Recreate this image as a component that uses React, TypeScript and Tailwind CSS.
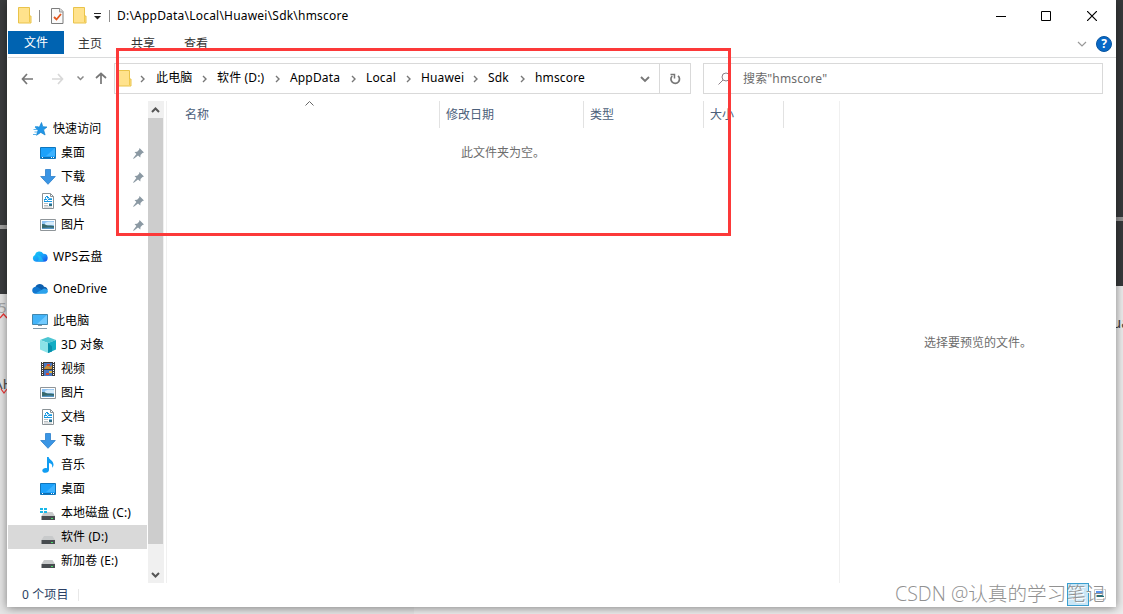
import type { ReactNode } from 'react';
import { clsx } from 'clsx';

interface NavItem {
  label: string;
  icon: ReactNode;
  root?: boolean;
  pinned?: boolean;
  selected?: boolean;
}

function FolderIcon() {
  return (
    <svg width="14" height="17" viewBox="0 0 14 17" className="shrink-0">
      <path d="M.5.5h11v8.500h1.500v7H.5z" fill="#ffe28c" stroke="#e9c34a" />
      <path d="M11.500 9v6" stroke="#f0c94e" />
    </svg>
  );
}

function CheckDocIcon() {
  return (
    <svg width="13" height="16" viewBox="0 0 13 16" className="shrink-0">
      <path d="M.5.5h8.500l3 3v12H.5z" fill="#fafafa" stroke="#7d7d7d" />
      <path d="M8.500.5v3.500H12" fill="#ddd" stroke="#999" />
      <path d="M3 9l2.500 2.500L10 6" fill="none" stroke="#e2571e" strokeWidth="1.800" />
    </svg>
  );
}

function StarIcon() {
  return (
    <svg width="16" height="16" viewBox="0 0 16 16">
      <path d="M9.500 1.500l1.300 4.200 4.200.3-3.400 2.800 1.500 5.200-4.300-2.600-4.300 2.900L6 9.300 3.200 6.300l4.300-.4z" fill="#2196e8" stroke="#1583cc" strokeWidth=".7" />
      <path d="M3 5.500h3M1.500 8.500H5M2.500 11H5M1 13.500h3" stroke="#59b4ee" />
    </svg>
  );
}

function DesktopIcon() {
  return (
    <svg width="16" height="16" viewBox="0 0 16 16">
      <path d="M.5 2.500h15v11H.5z" fill="#1ba1fb" stroke="#0f76bd" />
      <path d="M6 11L15 3v8z" fill="#3db2ff" />
      <path d="M1 12.500h14" stroke="#0d6cb0" />
      <path d="M2 12.500h1M11 12.500h1M13 12.500h1" stroke="#fff" />
    </svg>
  );
}

function DownloadIcon() {
  return (
    <svg width="16" height="16" viewBox="0 0 16 16">
      <path d="M5.500.5h5v7h4.800L8 15.300.7 7.500h4.800z" fill="#3a95e4" stroke="#2b7fcb" strokeWidth=".8" />
    </svg>
  );
}

function DocumentIcon() {
  return (
    <svg width="16" height="16" viewBox="0 0 16 16">
      <path d="M2.500.5h8l3 3v12h-11z" fill="#fff" stroke="#8a9296" />
      <path d="M10.500.5v3h3" fill="none" stroke="#8a9296" />
      <path d="M6 3.500h2M5 4.500h1M7 4.500h2M4 6.500h3M8 6.500h4M4 8.500h8" stroke="#1596e0" />
      <path d="M5 5.500h1M7.500 5.500h1M9 5.500h3M4 7.500h1M7 7.500h1" stroke="#55b5ea" />
      <path d="M4 10.500h4M4 12.500h4M4 14h8" stroke="#a7adb1" strokeWidth=".8" />
      <path d="M9 10h3v1H9z" fill="#6db7ea" />
      <path d="M9 11h3v2H9z" fill="#2e6f86" />
    </svg>
  );
}

function PictureIcon() {
  return (
    <svg width="16" height="16" viewBox="0 0 16 16">
      <path d="M.5 2.500h15v11H.5z" fill="#fff" stroke="#8f9599" />
      <path d="M2 4h12v8H2z" fill="#8fc3f3" />
      <path d="M5 6c2-1.500 5-1.500 9-1v3H5z" fill="#d5ebfb" />
      <path d="M2 7c3-.6 4 1.500 6 1.500S12 8.500 14 9v3H2z" fill="#37696c" />
      <path d="M2 11l7-.5 5 .2V12H2z" fill="#5796c6" />
    </svg>
  );
}

function WpsCloudIcon() {
  return (
    <svg width="16" height="16" viewBox="0 0 16 16">
      <defs>
        <linearGradient id="wps" x1="0" x2="1" y1="0" y2="1">
          <stop offset="0" stopColor="#13d4f5" />
          <stop offset=".55" stopColor="#189cf9" />
          <stop offset="1" stopColor="#1649e8" />
        </linearGradient>
      </defs>
      <path d="M4.500 13.500A3.500 3.500 0 013 6.800 4.500 4.500 0 0111.300 5.500a4 4 0 01.7 8z" fill="url(#wps)" transform="translate(0 -.8)" />
      <path d="M5 6.500c2.500-.6 3.800.8 4.500 2l2.500 4H5.500C7.500 10 6.800 8 5 6.500z" fill="#20cdf2" opacity=".6" />
    </svg>
  );
}

function OneDriveIcon() {
  return (
    <svg width="16" height="16" viewBox="0 0 16 16">
      <g transform="translate(0 -.7)">
        <path d="M3.500 6.500a4.600 4.600 0 018.500 0c2 0 3.700 1.700 3.700 3.500L8 11z" fill="#0c5fae" />
        <path d="M3.500 13.500C1.500 13.500.2 12 .2 10a3.600 3.600 0 015.300-3.200L14 12.500z" fill="#1277cf" />
        <path d="M3 13.500L12 8.200c2 0 3.800 1 3.800 2.800 0 1.500-1.100 2.500-2.600 2.500z" fill="#2ba2ec" />
      </g>
    </svg>
  );
}

function ComputerIcon() {
  return (
    <svg width="16" height="16" viewBox="0 0 16 16">
      <path d="M.5 1.500h15v10H.5z" fill="#42b3f8" stroke="#4187ae" />
      <path d="M5 11L15 2v9z" fill="#71caff" />
      <path d="M6 12.500h4" stroke="#8b98a2" />
      <path d="M1 15.500h14" stroke="#8299a9" />
    </svg>
  );
}

function CubeIcon() {
  return (
    <svg width="16" height="16" viewBox="0 0 16 16">
      <path d="M8 0l8 3-8 3-8-3z" fill="#4cc5d2" />
      <path d="M0 3l8 3v10l-8-3.500z" fill="#8be3e8" />
      <path d="M16 3L8 6v10l8-3.500z" fill="#12acc4" />
      <path d="M8 6l4 3.500v5L8 16z" fill="#078fab" />
    </svg>
  );
}

function VideoIcon() {
  return (
    <svg width="16" height="16" viewBox="0 0 16 16">
      <path d="M1 1h14v14H1z" fill="#3c3c3c" />
      <path d="M4 2h8v6H4zM4 9h8v6H4z" fill="#4877c5" />
      <path d="M5 6l2-2 3 2 2-2v4H4z" fill="#c88f35" />
      <path d="M7 3h3v2H7zM6 12h3v2H6z" fill="#d44932" />
      <path d="M9 10h3v2H9z" fill="#e1b83e" />
      <path d="M2.500 1v14M13.500 1v14" stroke="#fff" strokeDasharray="1 1" />
    </svg>
  );
}

function MusicIcon() {
  return (
    <svg width="16" height="16" viewBox="0 0 16 16">
      <path d="M7 0h1.700c.2 2.500 4.800 3.500 4.800 7.500 0 1.200-.4 2.300-1.300 3.200.5-3-1-4.400-3.200-4.700V13c0 1.600-1.500 2.800-3.500 2.800S2.300 15 2.300 13.500C2.300 12 4 11 5.500 11c.6 0 1.100.1 1.500.3z" fill="#119df2" />
    </svg>
  );
}

function DriveIcon({ system }: { system?: boolean }) {
  return (
    <svg width="16" height="16" viewBox="0 0 16 16">
      <path d="M4 7h8.500L15 11H1.500z" fill="#c8cacb" />
      <path d="M1.500 11H15v4H1.500z" fill="#484c50" />
      <path d="M11 13.500h2" stroke="#49dc67" />
      {system && <path d="M0 3h3v2H0zM4 3h3v2H4zM0 6h3v2H0zM4 6h3v2H4z" fill="#18b7e9" />}
    </svg>
  );
}

function PinIcon() {
  return (
    <svg width="11" height="11" viewBox="0 0 11 11">
      <path d="M6.500 0L11 4.500l-1.500.4-2 2-.2 2.600L5 7.500.8 10.800 0 10.500 3.400 6 1.500 4l2.600-.3 2-2z" fill="#8b99a3" />
    </svg>
  );
}

const quickAccess: NavItem[] = [
  { label: '快速访问', icon: <StarIcon />, root: true },
  { label: '桌面', icon: <DesktopIcon />, pinned: true },
  { label: '下载', icon: <DownloadIcon />, pinned: true },
  { label: '文档', icon: <DocumentIcon />, pinned: true },
  { label: '图片', icon: <PictureIcon />, pinned: true },
];

const thisPc: NavItem[] = [
  { label: '此电脑', icon: <ComputerIcon />, root: true },
  { label: '3D 对象', icon: <CubeIcon /> },
  { label: '视频', icon: <VideoIcon /> },
  { label: '图片', icon: <PictureIcon /> },
  { label: '文档', icon: <DocumentIcon /> },
  { label: '下载', icon: <DownloadIcon /> },
  { label: '音乐', icon: <MusicIcon /> },
  { label: '桌面', icon: <DesktopIcon /> },
  { label: '本地磁盘 (C:)', icon: <DriveIcon system /> },
  { label: '软件 (D:)', icon: <DriveIcon />, selected: true },
  { label: '新加卷 (E:)', icon: <DriveIcon /> },
];

const groups: NavItem[][] = [
  quickAccess,
  [{ label: 'WPS云盘', icon: <WpsCloudIcon />, root: true }],
  [{ label: 'OneDrive', icon: <OneDriveIcon />, root: true }],
  thisPc,
];

const crumbs = [
  { label: '此电脑', width: 'w-[61px]' },
  { label: '软件 (D:)', width: 'w-[73px]' },
  { label: 'AppData', width: 'w-[76px]' },
  { label: 'Local', width: 'w-[55px]' },
  { label: 'Huawei', width: 'w-[67px]' },
  { label: 'Sdk', width: 'w-[47px]' },
  { label: 'hmscore', width: 'w-[105px]' },
];

const columns = [
  { label: '名称', width: 'w-[273px] pl-[18px]' },
  { label: '修改日期', width: 'w-36 pl-1.5' },
  { label: '类型', width: 'w-[120px] pl-1.5' },
  { label: '大小', width: 'w-20 pl-1.5' },
];

function CrumbChevron() {
  return (
    <svg width="5" height="8" viewBox="0 0 5 8" className="shrink-0">
      <path d="M1 1l3 3-3 3" fill="none" stroke="#777" strokeWidth="1.400" />
    </svg>
  );
}

function TitleBar() {
  return (
    <div className="flex h-[31px] items-center pl-2.5">
      <FolderIcon />
      <span className="ml-[7px] h-3 w-px bg-[#8c8c8c]" />
      <span className="ml-[11px]"><CheckDocIcon /></span>
      <span className="ml-[9px]"><FolderIcon /></span>
      <svg width="7" height="7" viewBox="0 0 7 7" className="mt-0.5 ml-[7px]">
        <path d="M0 .5h7" stroke="#222" />
        <path d="M0 3h7L3.500 6.500z" fill="#222" />
      </svg>
      <span className="ml-2 h-3 w-px bg-[#8c8c8c]" />
      <span className="ml-[7px] text-[12px] tracking-[0.21px] text-black">D:\AppData\Local\Huawei\Sdk\hmscore</span>
      <div className="mr-[19px] ml-auto flex items-center">
        <svg width="10" height="10"><path d="M0 5.500h10" stroke="#000" /></svg>
        <svg width="10" height="10" className="ml-[35px]"><path d="M.5.5h9v9h-9z" fill="none" stroke="#000" /></svg>
        <svg width="10" height="10" className="ml-9"><path d="M0 0l10 10M10 0L0 10" stroke="#000" strokeWidth="1.200" /></svg>
      </div>
    </div>
  );
}

function RibbonTabs() {
  return (
    <div className="flex h-[27px] items-start border-b border-[#dadbdc]">
      <div className="flex h-[23px] w-14 items-center justify-center bg-[#0063b1] text-white">文件</div>
      {['主页', '共享', '查看'].map((tab) => (
        <div key={tab} className="flex h-[25px] w-[53px] items-center justify-center pr-px text-[#333]">
          {tab}
        </div>
      ))}
      <div className="mt-[5px] mr-1 ml-auto flex items-center gap-[9px]">
        <svg width="10" height="6" viewBox="0 0 10 6">
          <path d="M1 1l4 4 4-4" fill="none" stroke="#999" strokeWidth="1.200" />
        </svg>
        <span className="flex size-4 items-center justify-center rounded-full border border-[#0855a0] bg-[#0868c6] text-[12px] font-bold text-white">
          ?
        </span>
      </div>
    </div>
  );
}

function AddressRow() {
  return (
    <div className="flex h-9 items-start pt-[5px]">
      <div className="flex h-[31px] w-[106px] items-center pl-[13px]">
        <svg width="13" height="12" viewBox="0 0 13 12">
          <path d="M6 1L1.500 6 6 11M1.500 6H12" fill="none" stroke="#777" strokeWidth="1.700" />
        </svg>
        <svg width="13" height="12" viewBox="0 0 13 12" className="ml-[17px]">
          <path d="M7 1l4.500 5L7 11M11.500 6H1" fill="none" stroke="#d8d8d8" strokeWidth="1.700" />
        </svg>
        <svg width="7" height="5" viewBox="0 0 7 5" className="ml-[13px]">
          <path d="M.5.5l3 3 3-3" fill="none" stroke="#888" strokeWidth="1.500" />
        </svg>
        <svg width="12" height="13" viewBox="0 0 12 13" className="ml-[11px]">
          <path d="M1 6l5-4.500L11 6M6 1.500V12" fill="none" stroke="#777" strokeWidth="1.700" />
        </svg>
      </div>
      <div className="flex h-[31px] w-[577px] items-center border border-[#d9d9d9] pl-[3px]">
        <FolderIcon />
        <span className="mr-[11px] ml-2"><CrumbChevron /></span>
        {crumbs.map((crumb, idx) => (
          <div key={crumb.label} className={clsx('flex items-center justify-between pr-2.5', crumb.width)}>
            <span className="-mt-0.5 tracking-[0.15px] text-black">{crumb.label}</span>
            {idx < crumbs.length - 1 && <CrumbChevron />}
          </div>
        ))}
        <svg width="10" height="7" viewBox="0 0 10 7" className="mt-0.5">
          <path d="M1 1l4 4 4-4" fill="none" stroke="#777" strokeWidth="1.900" />
        </svg>
        <div className="ml-auto flex h-full w-[31px] items-center justify-center border-l border-[#d9d9d9]">
          <svg width="12" height="12" viewBox="0 0 12 12">
            <path d="M9 2.800A4.300 4.300 0 113.200 3" fill="none" stroke="#777" strokeWidth="1.700" />
            <path d="M1.500 1.500h4v4" fill="none" stroke="#777" strokeWidth="1.500" />
          </svg>
        </div>
      </div>
      <div className="ml-3 flex h-[31px] w-[400px] items-center border border-[#d9d9d9] pl-3.5">
        <svg width="13" height="13" viewBox="0 0 13 13">
          <circle cx="8" cy="5" r="4" fill="none" stroke="#8d8087" />
          <path d="M5 8L.5 12.500" stroke="#8d8087" />
        </svg>
        <span className="ml-3 tracking-[0.15px] text-[#6b6b6b]">搜索"hmscore"</span>
      </div>
    </div>
  );
}

function NavRow({ item }: { item: NavItem }) {
  return (
    <div
      className={clsx(
        'flex h-6 items-center gap-[5px] text-black',
        item.root ? 'pl-6' : 'pl-8',
        item.selected && 'bg-[#d9d9d9]'
      )}
    >
      {item.icon}
      <span className="-mt-px tracking-[0.1px] whitespace-nowrap">{item.label}</span>
      {item.pinned && <span className="mr-[3px] ml-auto"><PinIcon /></span>}
    </div>
  );
}

function ScrollBar() {
  return (
    <div className="mt-[7px] ml-px flex w-4 flex-col bg-[#f0f0f0]">
      <div className="flex h-[17px] items-center justify-center pr-px">
        <svg width="9" height="6" viewBox="0 0 9 6"><path d="M1 5l3.500-3.500L8 5" fill="none" stroke="#555" strokeWidth="2" /></svg>
      </div>
      <div className="h-[426px] w-[15px] bg-[#cdcdcd]" />
      <div className="mt-auto flex h-[17px] items-center justify-center pr-px">
        <svg width="9" height="6" viewBox="0 0 9 6"><path d="M1 1l3.500 3.500L8 1" fill="none" stroke="#555" strokeWidth="2" /></svg>
      </div>
    </div>
  );
}

function FileList() {
  return (
    <div className="mt-[7px] ml-0.5 w-[673px] border-l border-[#f0f0f0]">
      <div className="relative flex h-[27px] text-[#4c607a]">
        {columns.map((col) => (
          <div key={col.label} className={clsx('flex items-center border-r border-[#e2e2e2]', col.width)}>
            {col.label}
          </div>
        ))}
        <svg width="9" height="5" viewBox="0 0 9 5" className="absolute top-0 left-[138px]">
          <path d="M.5 4.500l4-4 4 4" fill="none" stroke="#666" />
        </svg>
      </div>
      <div className="mt-[15px] text-center leading-[20px] text-[#6d6d6d]">此文件夹为空。</div>
    </div>
  );
}

function StatusBar() {
  return (
    <div className="flex h-6 items-center pl-3.5 text-[#2b3f63]">
      <span className="tracking-[0.1px]">0 个项目</span>
      <span className="ml-[10px] h-3 w-px bg-[#e8e8e8]" />
      <div className="mr-2.5 mb-0.5 ml-auto flex items-center gap-[5px]">
        <div className="flex h-[23px] w-[22px] items-center justify-center border border-[#3a9fd0] bg-[#c9e6f6]">
          <svg width="14" height="11" viewBox="0 0 14 11">
            <path d="M1 1.500h12M1 5.500h12M1 9.500h12" stroke="#eaf5fb" strokeWidth="2" />
            <path d="M2 5.500h1.500M2 9.500h1.500" stroke="#d06a4a" />
          </svg>
        </div>
        <svg width="12" height="11" viewBox="0 0 12 11">
          <path d="M.5.5h11v10H.5z" fill="#fff" stroke="#c5c5c5" />
          <path d="M2 2h8v2H2z" fill="#5793ee" />
          <path d="M2 4h8v2H2z" fill="#b8dcf6" />
          <path d="M2 6h8v2H2z" fill="#2b6c72" />
        </svg>
      </div>
    </div>
  );
}

/** Slivers of the editor that show on either side of the window. */
function Backdrop() {
  return (
    <div className="absolute inset-0 flex justify-between overflow-hidden bg-[#ececec]">
      <div className="relative w-[414px] bg-[#e5e5e5]">
        <div className="h-[294px] bg-[#3b3d3f]" />
        <div className="absolute top-[225px] h-1 w-full bg-[#a0a0a0]" />
        <div className="absolute top-[297px] left-[-2px] text-[15px] leading-5 text-[#aaa]">5</div>
        <div className="absolute top-[373px] left-[-7px] text-[15px] leading-5 text-[#555]">AH</div>
        <svg width="8" height="90" className="absolute top-[312px] left-0">
          <path d="M0 6l3.500-4L7 6M1 77l3 4 3-4" fill="none" stroke="#e33" strokeWidth="1.200" />
        </svg>
      </div>
      <div className="relative w-10">
        <div className="h-[286px] bg-[#37393b]" />
        <div className="absolute top-[217px] h-1 w-full bg-[#929292]" />
        <div className="absolute top-[312px] left-[29px] text-[15px] leading-5 text-[#444]">ua</div>
      </div>
    </div>
  );
}

export default function App() {
  return (
    <div className="relative h-[614px] w-[1123px] overflow-hidden font-['Noto_Sans','Noto_Sans_CJK_SC',sans-serif] text-[12px] leading-[16px]">
      <Backdrop />
      <div className="relative ml-[7px] flex h-[607px] w-[1109px] flex-col bg-white pl-px shadow-[0_1px_9px_rgba(0,0,0,0.45)]">
        <TitleBar />
        <RibbonTabs />
        <AddressRow />
        <div className="flex h-[489px]">
          <div className="flex w-[139px] flex-col gap-2 pt-[23px]">
            {groups.map((group) => (
              <div key={group[0].label}>
                {group.map((item) => (
                  <NavRow key={item.label} item={item} />
                ))}
              </div>
            ))}
          </div>
          <ScrollBar />
          <FileList />
          <div className="mt-[7px] flex flex-1 items-center justify-center border-l border-[#f0f0f0] pt-px text-[#6d6d6d]">
            选择要预览的文件。
          </div>
        </div>
        <StatusBar />
      </div>
      <div className="absolute top-12 left-[116px] h-[188px] w-[615px] border-[3px] border-[#fc3939]" />
      <div className="absolute top-[582px] left-[895px] font-['Open_Sans','Noto_Sans_CJK_SC',sans-serif] text-[19.600px] leading-6 font-light whitespace-nowrap text-[#919191] [text-shadow:1px_1px_0_#fff]">
        CSDN @认真的学习笔记
      </div>
    </div>
  );
}
